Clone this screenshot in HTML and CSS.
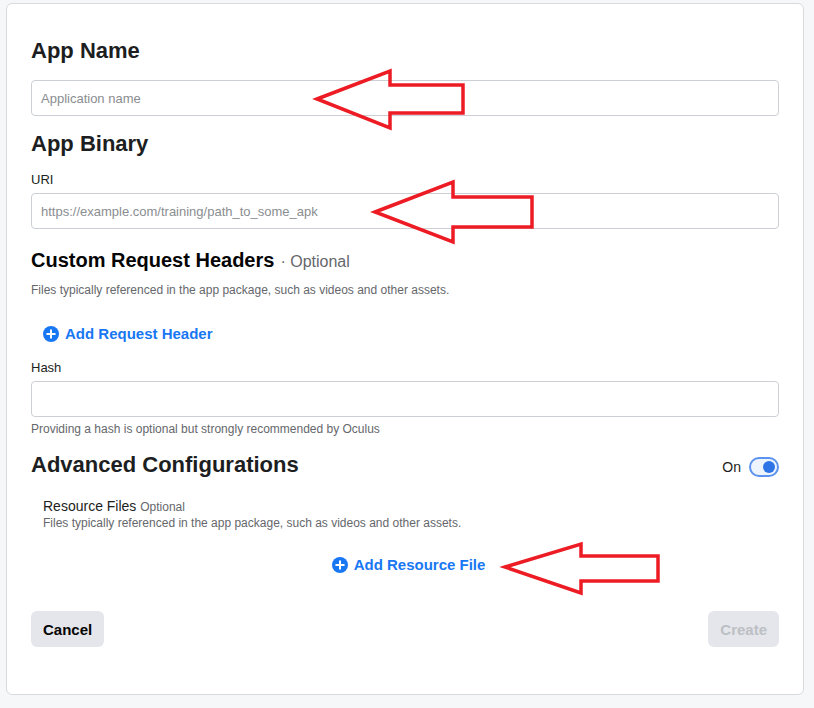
FILE: index.html
```html
<!DOCTYPE html>
<html>
<head>
<meta charset="utf-8">
<link rel="stylesheet" href="styles.css">
</head>
<body>
<div class="card">
  <h2 class="heading h-first">App Name</h2>
  <div class="input input-gap-heading"><span class="ph">Application name</span></div>

  <h2 class="heading h-next">App Binary</h2>
  <div class="label label-after-heading">URI</div>
  <div class="input input-gap-label"><span class="ph">https://example.com/training/path_to_some_apk</span></div>

  <div class="heading-row h-custom">
    <h3 class="heading-sm">Custom Request Headers</h3>
    <span class="optional">· Optional</span>
  </div>
  <div class="desc desc-custom">Files typically referenced in the app package, such as videos and other assets.</div>

  <div class="link-row link-header">
    <span class="link">
      <svg class="plus" width="16" height="16" viewBox="0 0 16 16"><circle cx="8" cy="8" r="8" fill="#1877f2"/><path d="M8 4.2v7.6M4.2 8h7.6" stroke="#fff" stroke-width="2" stroke-linecap="round"/></svg>
      Add Request Header
    </span>
  </div>

  <div class="label label-hash">Hash</div>
  <div class="input input-gap-label"></div>
  <div class="desc desc-help">Providing a hash is optional but strongly recommended by Oculus</div>

  <div class="adv-row">
    <h2 class="heading">Advanced Configurations</h2>
    <div class="toggle-wrap">
      <span class="on">On</span>
      <span class="toggle"><span class="knob"></span></span>
    </div>
  </div>

  <div class="resource">
    <div class="res-title">Resource Files <span class="res-opt">Optional</span></div>
    <div class="desc">Files typically referenced in the app package, such as videos and other assets.</div>
    <div class="link-row link-resource">
      <span class="link">
        <svg class="plus" width="16" height="16" viewBox="0 0 16 16"><circle cx="8" cy="8" r="8" fill="#1877f2"/><path d="M8 4.2v7.6M4.2 8h7.6" stroke="#fff" stroke-width="2" stroke-linecap="round"/></svg>
        Add Resource File
      </span>
    </div>
  </div>

  <div class="actions">
    <button class="btn">Cancel</button>
    <button class="btn btn-disabled">Create</button>
  </div>
</div>

<svg class="annotations" width="814" height="708" viewBox="0 0 814 708">
  <polygon points="317,99 390,71 390,85 463,85 463,113 390,113 390,128" />
  <polygon points="375,212 453,182 453,197 532,197 532,227 453,227 453,242" />
  <polygon points="505,567 581,544 581,556 658,556 658,581 581,581 581,593" />
</svg>
</body>
</html>
```

FILE: styles.css
```css
* { box-sizing: border-box; }

html, body {
  margin: 0;
  padding: 0;
}

body {
  background: #f6f7f9;
  font-family: "Liberation Sans", Arial, sans-serif;
  color: #1c1e21;
  width: 814px;
  height: 708px;
  position: relative;
  overflow: hidden;
  padding: 3px 10px 0 6px;
}

.card {
  background: #fff;
  border: 1px solid #d8dade;
  border-radius: 6px;
  padding: 33px 24px 47px 24px;
  display: flex;
  flex-direction: column;
}

.heading {
  margin: 0;
  font-size: 22px;
  line-height: 28px;
  font-weight: bold;
  color: #1c1e21;
}

.h-next { margin-top: 14px; }

.input {
  height: 36px;
  border: 1px solid #ccd0d5;
  border-radius: 4px;
  padding: 0 9px;
  display: flex;
  align-items: center;
  font-size: 13px;
}

.input-gap-heading { margin-top: 15px; }
.input-gap-label { margin-top: 5px; }

.ph { color: #8a8d91; }

.label {
  font-size: 13px;
  line-height: 16px;
  color: #1c1e21;
}

.label-after-heading { margin-top: 14px; }
.label-hash { margin-top: 16px; }

.heading-row {
  display: flex;
  align-items: baseline;
  gap: 6px;
}

.h-custom { margin-top: 19px; }

.heading-sm {
  margin: 0;
  font-size: 20px;
  line-height: 24px;
  font-weight: bold;
  color: #050505;
}

.optional {
  font-size: 16px;
  color: #65676b;
}

.desc {
  font-size: 12px;
  line-height: 16px;
  color: #65676b;
}

.desc-custom { margin-top: 10px; }
.desc-help { margin-top: 4px; }

.link-row {
  display: flex;
  line-height: 20px;
}

.link-header {
  margin-top: 26px;
  padding-left: 12px;
}

.link {
  display: inline-flex;
  align-items: center;
  gap: 6px;
  color: #1877f2;
  font-weight: bold;
  font-size: 15px;
}

.plus { flex: none; }

.adv-row {
  margin-top: 14px;
  display: flex;
  align-items: center;
  justify-content: space-between;
}

.toggle-wrap {
  display: flex;
  align-items: center;
  gap: 8px;
  margin-top: 4px;
}

.on {
  font-size: 14px;
  color: #1c1e21;
}

.toggle {
  width: 30px;
  height: 20px;
  border: 2px solid #5b93ef;
  border-radius: 10px;
  background: #eef4fe;
  display: flex;
  align-items: center;
  justify-content: flex-end;
  padding-right: 2px;
}

.knob {
  width: 12px;
  height: 12px;
  border-radius: 50%;
  background: #2f74e6;
}

.resource {
  margin-top: 19px;
  padding: 0 12px;
}

.res-title {
  font-size: 14px;
  line-height: 16px;
  color: #1c1e21;
}

.res-opt {
  font-size: 12px;
  color: #65676b;
}

.link-resource {
  margin-top: 24px;
  justify-content: center;
  padding-left: 7px;
}

.actions {
  margin-top: 36px;
  display: flex;
  justify-content: space-between;
}

.btn {
  height: 36px;
  padding: 0 12px;
  border: none;
  border-radius: 6px;
  background: #e4e6eb;
  font-family: "Liberation Sans", Arial, sans-serif;
  font-size: 15px;
  font-weight: bold;
  color: #050505;
}

.btn-disabled {
  color: #bcc0c4;
}

.annotations {
  position: absolute;
  left: 0;
  top: 0;
  pointer-events: none;
}

.annotations polygon {
  fill: none;
  stroke: #ed1c24;
  stroke-width: 3.5;
  stroke-linejoin: miter;
}
```
